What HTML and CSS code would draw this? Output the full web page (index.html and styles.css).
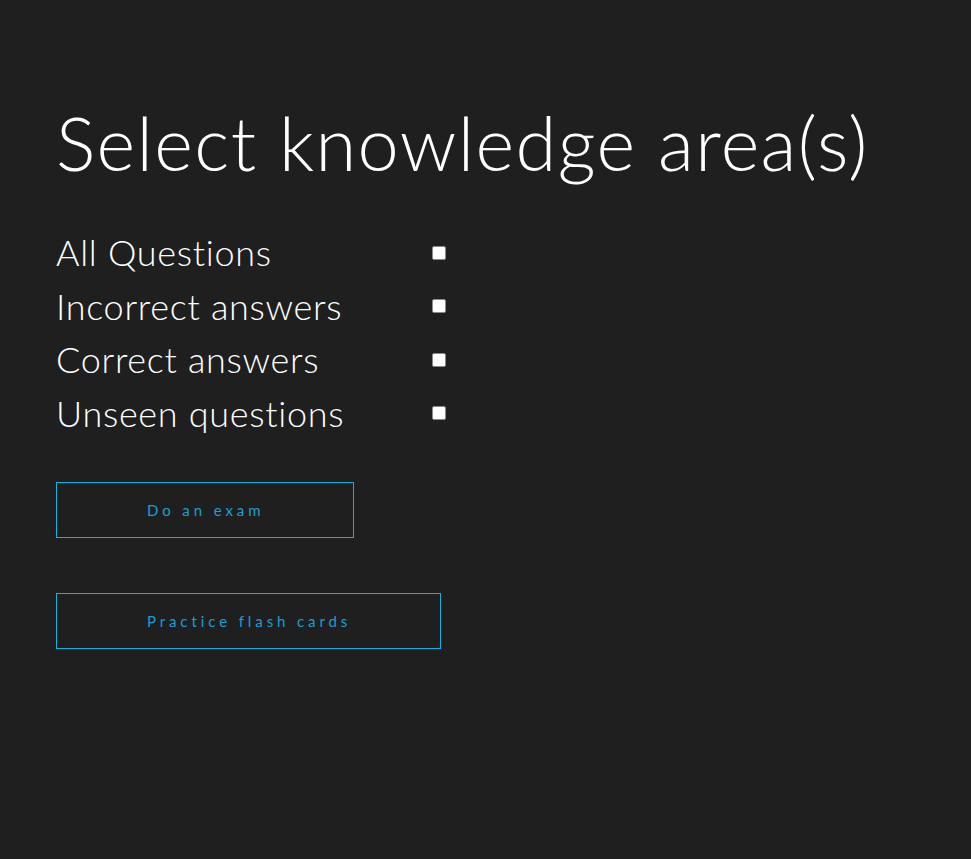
FILE: index.html
```html
<!DOCTYPE html>
<html>
<head>
<meta charset="utf-8">
<link rel="stylesheet" href="styles.css">
</head>
<body>
<main class="page">
  <h1 class="title">Select knowledge area(s)</h1>
  <div class="options">
    <label class="option"><span class="option-label">All Questions</span><input type="checkbox" class="check"></label>
    <label class="option"><span class="option-label">Incorrect answers</span><input type="checkbox" class="check"></label>
    <label class="option"><span class="option-label">Correct answers</span><input type="checkbox" class="check"></label>
    <label class="option"><span class="option-label">Unseen questions</span><input type="checkbox" class="check"></label>
  </div>
  <div class="actions">
    <button class="btn">Do an exam</button>
    <button class="btn">Practice flash cards</button>
  </div>
</main>
</body>
</html>
```
FILE: styles.css
```css
html, body {
  margin: 0;
  padding: 0;
  background: #1f1f1f;
  height: 100%;
}
body {
  font-family: "Lato", "Open Sans", sans-serif;
  color: #ffffff;
}
.page {
  padding: 100px 56px 0 56px;
}
.title {
  margin: 0;
  font-weight: 300;
  font-size: 74px;
  line-height: 86px;
  letter-spacing: 1.4px;
}
.options {
  display: flex;
  flex-direction: column;
  margin-top: 40px;
}
.option {
  display: grid;
  grid-template-columns: 376px auto;
  align-items: center;
  height: 53.5px;
}
.option-label {
  font-size: 36px;
  font-weight: 300;
  line-height: 53px;
  letter-spacing: 0.7px;
}
.check {
  appearance: none;
  -webkit-appearance: none;
  box-sizing: border-box;
  width: 14px;
  height: 14px;
  margin: 0;
  background: #ffffff;
  border: 1px solid #8a8a8a;
  border-radius: 2px;
}
.actions {
  display: flex;
  flex-direction: column;
  align-items: flex-start;
  gap: 55px;
  margin-top: 42px;
}
.btn {
  background: transparent;
  border: 1px solid #0bb5e0;
  color: #1c9ed4;
  font-family: "Lato", sans-serif;
  font-size: 15px;
  letter-spacing: 3.9px;
  padding: 0 89px 0 90px;
  height: 56px;
}
```
